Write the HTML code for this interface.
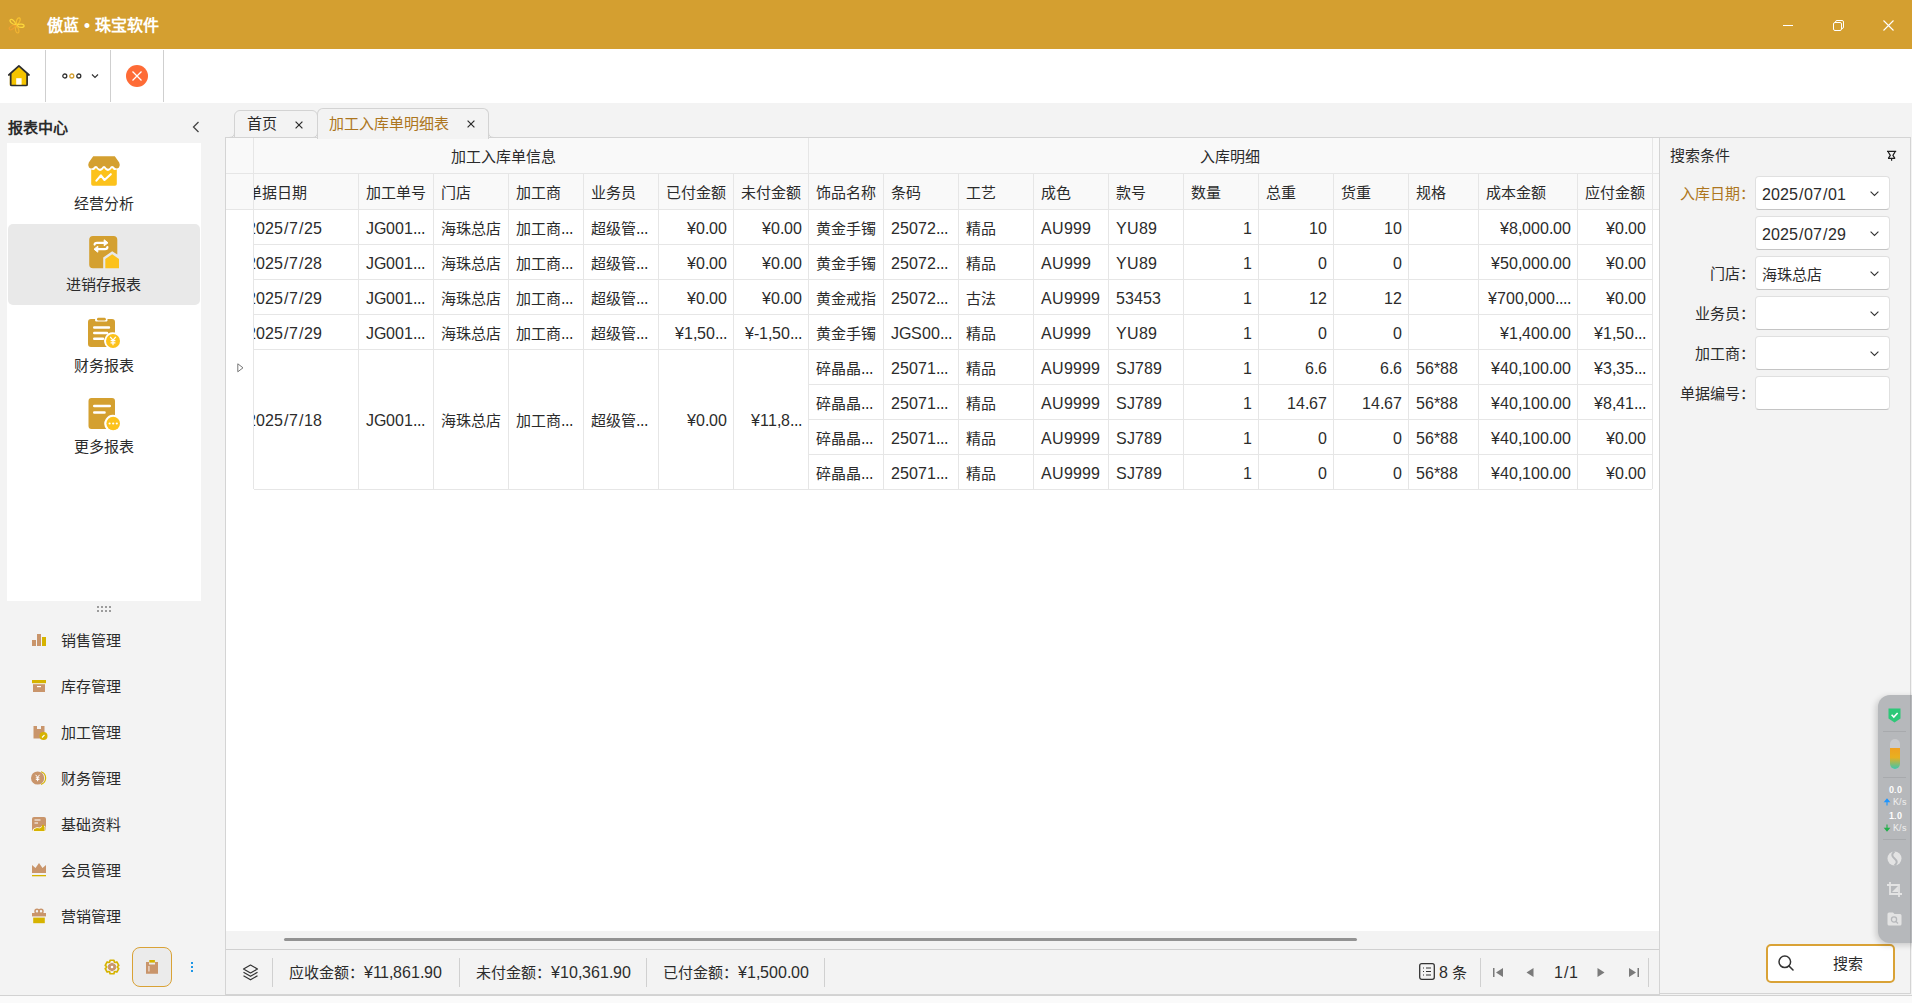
<!DOCTYPE html><html lang="zh-CN"><head><meta charset="utf-8"><style>
@font-face{font-family:"Liberation Sans";src:local("Liberation Sans"),local("LiberationSans");font-weight:400;size-adjust:105%;unicode-range:U+0000-024F,U+2000-206F,U+20A0-20CF}
@font-face{font-family:"Liberation Sans";src:local("Liberation Sans Bold"),local("LiberationSans-Bold");font-weight:700;size-adjust:105%;unicode-range:U+0000-024F,U+2000-206F,U+20A0-20CF}
*{box-sizing:border-box;margin:0;padding:0}
html,body{width:1912px;height:1003px;overflow:hidden}
body{position:relative;background:#f3f3f3;font-family:"Liberation Sans",sans-serif;font-size:15px;color:#2b2b2b}
.a{position:absolute}
.t{position:absolute;white-space:nowrap;line-height:23px}
.hl{position:absolute;height:1px;background:#e6e6e6}
.vl{position:absolute;width:1px;background:#e6e6e6}
svg{position:absolute;overflow:visible}
.sl{font-style:normal;margin:0 .9px}
</style></head><body>
<div class="a" style="left:0px;top:0px;width:1912px;height:49px;background:#d49f30"></div>
<svg style="left:8px;top:17px" width="16" height="16" viewBox="0 0 16 16"><path d="M0 -0.8C-2.6 -3.2 -2.6 -8.6 -0.6 -8.8C1.6 -9 2.8 -3.6 0 -0.8Z" transform="translate(8.2 8.2) scale(0.9) rotate(-45)" fill="none" stroke="#fcd63c" stroke-width="1.3"/><path d="M0 -0.8C-2.6 -3.2 -2.6 -8.6 -0.6 -8.8C1.6 -9 2.8 -3.6 0 -0.8Z" transform="translate(8.2 8.2) scale(0.9) rotate(27)" fill="none" stroke="#f8c030" stroke-width="1.3"/><path d="M0 -0.8C-2.6 -3.2 -2.6 -8.6 -0.6 -8.8C1.6 -9 2.8 -3.6 0 -0.8Z" transform="translate(8.2 8.2) scale(0.9) rotate(99)" fill="none" stroke="#fdd83c" stroke-width="1.3"/><path d="M0 -0.8C-2.6 -3.2 -2.6 -8.6 -0.6 -8.8C1.6 -9 2.8 -3.6 0 -0.8Z" transform="translate(8.2 8.2) scale(0.9) rotate(171)" fill="none" stroke="#f2b432" stroke-width="1.3"/><path d="M0 -0.8C-2.6 -3.2 -2.6 -8.6 -0.6 -8.8C1.6 -9 2.8 -3.6 0 -0.8Z" transform="translate(8.2 8.2) scale(0.9) rotate(243)" fill="none" stroke="#f0a030" stroke-width="1.3"/></svg>
<div class="t" style="left:47px;top:14px;color:#fff;font-size:16px;font-weight:bold">傲蓝 • 珠宝软件</div>
<div class="a" style="left:1783px;top:25px;width:10px;height:1px;background:#fff"></div>
<svg style="left:1833px;top:20px" width="11" height="11" viewBox="0 0 11 11"><rect x="0.5" y="2.5" width="8" height="8" rx="1.5" fill="none" stroke="#fff" stroke-width="1"/><path d="M2.5 2.5V2a1.5 1.5 0 0 1 1.5-1.5h5A1.5 1.5 0 0 1 10.5 2v5A1.5 1.5 0 0 1 9 8.5h-.5" fill="none" stroke="#fff" stroke-width="1"/></svg>
<svg style="left:1883px;top:20px" width="11" height="11" viewBox="0 0 11 11"><path d="M0.5 0.5L10.5 10.5M10.5 0.5L0.5 10.5" stroke="#fff" stroke-width="1.1"/></svg>
<div class="a" style="left:0px;top:49px;width:1912px;height:54px;background:#fff"></div>
<div class="a" style="left:45px;top:50px;width:1px;height:52px;background:#cfcfcf"></div>
<div class="a" style="left:110px;top:50px;width:1px;height:52px;background:#cfcfcf"></div>
<div class="a" style="left:163px;top:50px;width:1px;height:52px;background:#cfcfcf"></div>
<svg style="left:8px;top:65px" width="22" height="22" viewBox="0 0 22 22"><path d="M1.8 9.6L10.9 1.4L20 9.6V20.4H1.8Z" fill="#f5c400"/><path d="M0.8 10L10.9 0.9L21 10" fill="none" stroke="#2e2e2e" stroke-width="1.7" stroke-linecap="round" stroke-linejoin="round"/><path d="M2.7 8.6V19.4Q2.7 20.5 3.8 20.5H18Q19.1 20.5 19.1 19.4V8.6" fill="none" stroke="#2e2e2e" stroke-width="1.7"/><rect x="8.2" y="13.2" width="5.4" height="6.4" fill="#fff"/></svg>
<svg style="left:62px;top:72px" width="40" height="8" viewBox="0 0 40 8"><circle cx="2.8" cy="4" r="2" fill="none" stroke="#333" stroke-width="1.3"/><circle cx="9.8" cy="4" r="2" fill="none" stroke="#d49f30" stroke-width="1.3"/><circle cx="16.8" cy="4" r="2" fill="none" stroke="#333" stroke-width="1.3"/><path d="M30 2.5L33 5.5L36 2.5" fill="none" stroke="#333" stroke-width="1.2"/></svg>
<svg style="left:126px;top:65px" width="22" height="22" viewBox="0 0 22 22"><circle cx="11" cy="11" r="11" fill="#fe6b36"/><path d="M6.5 6.5L15.5 15.5M15.5 6.5L6.5 15.5" stroke="#fff" stroke-width="1.3"/></svg>
<div class="t" style="left:8px;top:116px;font-weight:bold">报表中心</div>
<svg style="left:191.5px;top:121px" width="8" height="12" viewBox="0 0 8 12"><path d="M6.5 1L1.5 6L6.5 11" fill="none" stroke="#444" stroke-width="1.3"/></svg>
<div class="a" style="left:7px;top:143px;width:194px;height:458px;background:#fff"></div>
<div class="a" style="left:8px;top:224px;width:192px;height:81px;background:#e9e9e9;border-radius:5px"></div>
<svg style="left:88px;top:156px" width="32" height="30" viewBox="0 0 32 30"><path d="M5.2 0.3H26.8L31.2 6.5Q32.6 9.5 31 11.4Q29.2 13 27 12Q25.5 10.2 24.1 10Q22.6 10.2 21.8 12Q20.2 13.6 18.4 12Q17.2 10.2 16 10Q14.8 10.2 13.6 12Q11.8 13.6 10.2 12Q9.4 10.2 7.9 10Q6.5 10.2 5 12Q2.8 13 1 11.4Q-0.6 9.5 0.8 6.5Z" fill="#d4a030"/><path d="M3.2 13.6Q5 14.6 6.6 13.4Q7.6 12.2 7.9 12.1Q8.4 12.2 9.4 13.6Q12.2 16.2 14.8 13.6Q15.6 12.2 16 12.1Q16.4 12.2 17.2 13.6Q19.8 16.2 22.6 13.6Q23.6 12.2 24.1 12.1Q24.4 12.2 25.4 13.4Q27 14.6 28.8 13.6V28a1.8 1.8 0 0 1-1.8 1.8H5a1.8 1.8 0 0 1-1.8-1.8Z" fill="#fcc21b"/><path d="M8.4 24.6L12.9 19.4L16.5 24L22.8 18.2" fill="none" stroke="#fff" stroke-width="2.1" stroke-linecap="round" stroke-linejoin="round"/></svg>
<div class="t" style="left:74px;top:192px;">经营分析</div>
<svg style="left:89px;top:236px" width="31" height="33" viewBox="0 0 31 33"><path d="M4 0H24.5A3.8 3.8 0 0 1 28.3 3.8V18.5L23.2 15.2L14.2 21.5V32.2H4A3.8 3.8 0 0 1 0.2 28.4V3.8A3.8 3.8 0 0 1 4 0Z" fill="#d4a030"/><path d="M16.3 23L23.2 18.2L30 23V32.2H16.3Z" fill="#fcc21b"/><path d="M5.6 8.6Q5.6 6.8 8 6.8H16" fill="none" stroke="#fff" stroke-width="2.2" stroke-linecap="round"/><path d="M15.2 3.8L19 6.8L15.2 9.8Z" fill="#fff" stroke="#fff" stroke-width="1" stroke-linejoin="round"/><path d="M18.4 11Q18.4 13.2 16 13.2H8" fill="none" stroke="#fff" stroke-width="2.2" stroke-linecap="round"/><path d="M8.8 10.2L5 13.2L8.8 16.2Z" fill="#fff" stroke="#fff" stroke-width="1" stroke-linejoin="round"/></svg>
<div class="t" style="left:66px;top:273px;">进销存报表</div>
<svg style="left:88px;top:318px" width="33" height="31" viewBox="0 0 33 31"><path d="M3 1H7.2A2 2 0 0 0 9 3.6H17.6A2 2 0 0 0 19.4 1H24A3 3 0 0 1 27 4V14.6A8.6 8.6 0 0 0 18.8 29H3A3 3 0 0 1 0 26V4A3 3 0 0 1 3 1Z" fill="#d4a030"/><rect x="9" y="-0.2" width="8.8" height="2.8" rx="1.4" fill="#d4a030"/><path d="M6.2 9.5H21M6.2 15H19M6.2 20.7H15" stroke="#fff" stroke-width="2.4" stroke-linecap="round"/><circle cx="25" cy="23" r="7" fill="#fcc21b"/><path d="M22.2 18.8L25 22.2L27.8 18.8M25 22.2V27.2M22.6 22.6H27.4M22.6 24.8H27.4" fill="none" stroke="#fff" stroke-width="1.2"/></svg>
<div class="t" style="left:74px;top:354px;">财务报表</div>
<svg style="left:88px;top:398px" width="33" height="33" viewBox="0 0 33 33"><path d="M3.5 0H24A3 3 0 0 1 27 3V16.9A8.8 8.8 0 0 0 18.3 31H3.5A3 3 0 0 1 0.5 28V3A3 3 0 0 1 3.5 0Z" fill="#d4a030"/><path d="M6.2 8H21.8M6.2 14.5H16.6" stroke="#fff" stroke-width="2.4" stroke-linecap="round"/><circle cx="25.2" cy="25.5" r="6.8" fill="#fcc21b"/><circle cx="21.6" cy="25.5" r="1.1" fill="#fff"/><circle cx="25.2" cy="25.5" r="1.1" fill="#fff"/><circle cx="28.8" cy="25.5" r="1.1" fill="#fff"/></svg>
<div class="t" style="left:74px;top:435px;">更多报表</div>
<div class="a" style="left:97px;top:606px;width:2px;height:2px;background:#9c9c9c"></div>
<div class="a" style="left:97px;top:610px;width:2px;height:2px;background:#9c9c9c"></div>
<div class="a" style="left:101px;top:606px;width:2px;height:2px;background:#9c9c9c"></div>
<div class="a" style="left:101px;top:610px;width:2px;height:2px;background:#9c9c9c"></div>
<div class="a" style="left:105px;top:606px;width:2px;height:2px;background:#9c9c9c"></div>
<div class="a" style="left:105px;top:610px;width:2px;height:2px;background:#9c9c9c"></div>
<div class="a" style="left:109px;top:606px;width:2px;height:2px;background:#9c9c9c"></div>
<div class="a" style="left:109px;top:610px;width:2px;height:2px;background:#9c9c9c"></div>
<svg style="left:32px;top:634px" width="16" height="16" viewBox="0 0 16 16"><rect x="0" y="6" width="4" height="6" fill="#c9956b"/><rect x="5" y="0" width="4" height="12" fill="#c9956b"/><rect x="10" y="3" width="4" height="9" fill="#d6b300"/></svg>
<div class="t" style="left:61px;top:629px;">销售管理</div>
<svg style="left:32px;top:680px" width="16" height="16" viewBox="0 0 16 16"><rect x="0" y="0" width="14" height="3.2" fill="#d6b300"/><rect x="1" y="4.2" width="12" height="7.8" fill="#c9956b"/><rect x="5" y="6" width="4" height="1.2" fill="#fff"/></svg>
<div class="t" style="left:61px;top:675px;">库存管理</div>
<svg style="left:33px;top:726px" width="16" height="16" viewBox="0 0 16 16"><path d="M0.5 0H4V3H8V0H11.5V8A5 5 0 0 0 8 12.5H0.5Z" fill="#c9956b"/><circle cx="10.5" cy="10" r="4" fill="#d6b300"/><path d="M9 11.5L11.5 9" stroke="#fff" stroke-width="1.1"/></svg>
<div class="t" style="left:61px;top:721px;">加工管理</div>
<svg style="left:31px;top:771px" width="16" height="16" viewBox="0 0 16 16"><path d="M10 0.8A6.6 6.6 0 0 1 10 13.4" fill="none" stroke="#d6b300" stroke-width="1.2"/><circle cx="6.6" cy="7" r="6.6" fill="#c9956b"/><path d="M4.6 3.8L6.6 6.2L8.6 3.8M6.6 6.2V10.2M4.8 6.8H8.4M4.8 8.4H8.4" fill="none" stroke="#fff" stroke-width="1"/></svg>
<div class="t" style="left:61px;top:767px;">财务管理</div>
<svg style="left:32px;top:817px" width="16" height="16" viewBox="0 0 16 16"><rect x="0" y="0" width="14" height="14" rx="2" fill="#c9956b"/><path d="M2.5 3H8.5M2.5 6H6" stroke="#fff" stroke-width="1.1"/><path d="M1.5 14.5V12Q5 9.5 8 11Q10 8 13 9.5V14.5Z" fill="#d6b300" stroke="#fff" stroke-width="0.8"/><circle cx="11" cy="9" r="1.2" fill="#d6b300"/></svg>
<div class="t" style="left:61px;top:813px;">基础资料</div>
<svg style="left:32px;top:863px" width="16" height="16" viewBox="0 0 16 16"><path d="M0 2L3.5 5L7 0L10.5 5L14 2V10H0Z" fill="#c9956b"/><rect x="0" y="12" width="14" height="1.3" fill="#d6b300"/></svg>
<div class="t" style="left:61px;top:859px;">会员管理</div>
<svg style="left:32px;top:909px" width="16" height="16" viewBox="0 0 16 16"><circle cx="5" cy="2.2" r="2" fill="none" stroke="#c9956b" stroke-width="1.5"/><circle cx="9" cy="2.2" r="2" fill="none" stroke="#c9956b" stroke-width="1.5"/><rect x="0" y="4" width="14" height="3.4" fill="#c9956b"/><rect x="1.2" y="8.6" width="11.6" height="5.6" fill="#d6b300"/></svg>
<div class="t" style="left:61px;top:905px;">营销管理</div>
<svg style="left:104px;top:959px" width="16" height="16" viewBox="0 0 16 16"><path d="M6.07 1.27 L9.93 1.27 L10.37 3.15 L11.02 3.52 L12.86 2.96 L14.79 6.31 L13.39 7.62 L13.39 8.38 L14.79 9.69 L12.86 13.04 L11.02 12.48 L10.37 12.85 L9.93 14.73 L6.07 14.73 L5.63 12.85 L4.98 12.48 L3.14 13.04 L1.21 9.69 L2.61 8.38 L2.61 7.62 L1.21 6.31 L3.14 2.96 L4.98 3.52 L5.63 3.15Z" fill="none" stroke="#d6b300" stroke-width="1.7" stroke-linejoin="round"/><path d="M8.00 4.10 L11.38 6.05 L11.38 9.95 L8.00 11.90 L4.62 9.95 L4.62 6.05Z" fill="#c9956b" stroke="#c9956b" stroke-width="1" stroke-linejoin="round"/><circle cx="8" cy="8" r="1.3" fill="#fff"/></svg>
<div class="a" style="left:132px;top:947px;width:40px;height:40px;border:1.5px solid #d9a236;border-radius:8px;background:#ebebeb"></div>
<svg style="left:146px;top:960px" width="13" height="15" viewBox="0 0 13 15"><path d="M0 2H3V4.5H9V2H12V13.8H0Z" fill="#c9956b"/><rect x="3.3" y="0" width="5.6" height="2.6" fill="#d6b300"/><rect x="2.5" y="6" width="0.9" height="5.5" fill="#fff"/></svg>
<div class="a" style="left:191px;top:962px;width:2px;height:2px;background:#1e96e6"></div>
<div class="a" style="left:191px;top:966px;width:2px;height:2px;background:#1e96e6"></div>
<div class="a" style="left:191px;top:970px;width:2px;height:2px;background:#1e96e6"></div>
<div class="a" style="left:0px;top:995px;width:1912px;height:1px;background:#d2d2d2"></div>
<div class="a" style="left:0px;top:996px;width:1912px;height:7px;background:#fafafa"></div>
<div class="a" style="left:225px;top:137px;width:1435px;height:858px;background:#f3f3f3;border:1px solid #d4d4d4"></div>
<div class="a" style="left:226px;top:138px;width:1433px;height:71px;background:#f9f9f9"></div>
<div class="a" style="left:226px;top:210px;width:1433px;height:721px;background:#fff"></div>
<div class="a" style="left:226px;top:173px;width:1433px;height:1px;background:#e6e6e6"></div>
<div class="a" style="left:226px;top:209px;width:1433px;height:1px;background:#e6e6e6"></div>
<div class="a" style="left:253px;top:138px;width:1px;height:351px;background:#e6e6e6"></div>
<div class="a" style="left:808px;top:138px;width:1px;height:35px;background:#e6e6e6"></div>
<div class="a" style="left:1652px;top:138px;width:1px;height:351px;background:#e6e6e6"></div>
<div class="a" style="left:358px;top:173px;width:1px;height:36px;background:#e6e6e6"></div>
<div class="a" style="left:433px;top:173px;width:1px;height:36px;background:#e6e6e6"></div>
<div class="a" style="left:508px;top:173px;width:1px;height:36px;background:#e6e6e6"></div>
<div class="a" style="left:583px;top:173px;width:1px;height:36px;background:#e6e6e6"></div>
<div class="a" style="left:658px;top:173px;width:1px;height:36px;background:#e6e6e6"></div>
<div class="a" style="left:733px;top:173px;width:1px;height:36px;background:#e6e6e6"></div>
<div class="a" style="left:808px;top:173px;width:1px;height:36px;background:#e6e6e6"></div>
<div class="a" style="left:883px;top:173px;width:1px;height:36px;background:#e6e6e6"></div>
<div class="a" style="left:958px;top:173px;width:1px;height:36px;background:#e6e6e6"></div>
<div class="a" style="left:1033px;top:173px;width:1px;height:36px;background:#e6e6e6"></div>
<div class="a" style="left:1108px;top:173px;width:1px;height:36px;background:#e6e6e6"></div>
<div class="a" style="left:1183px;top:173px;width:1px;height:36px;background:#e6e6e6"></div>
<div class="a" style="left:1258px;top:173px;width:1px;height:36px;background:#e6e6e6"></div>
<div class="a" style="left:1333px;top:173px;width:1px;height:36px;background:#e6e6e6"></div>
<div class="a" style="left:1408px;top:173px;width:1px;height:36px;background:#e6e6e6"></div>
<div class="a" style="left:1478px;top:173px;width:1px;height:36px;background:#e6e6e6"></div>
<div class="a" style="left:1577px;top:173px;width:1px;height:36px;background:#e6e6e6"></div>
<div class="t" style="left:203px;width:600px;text-align:center;top:145px;">加工入库单信息</div>
<div class="t" style="left:930px;width:600px;text-align:center;top:145px;">入库明细</div>
<div class="a" style="left:254px;top:173px;width:104px;height:36px;overflow:hidden">
<div class="t" style="left:-7px;top:8px">单据日期</div>
</div>
<div class="t" style="left:366px;top:181px;">加工单号</div>
<div class="t" style="left:441px;top:181px;">门店</div>
<div class="t" style="left:516px;top:181px;">加工商</div>
<div class="t" style="left:591px;top:181px;">业务员</div>
<div class="t" style="left:666px;top:181px;">已付金额</div>
<div class="t" style="left:741px;top:181px;">未付金额</div>
<div class="t" style="left:816px;top:181px;">饰品名称</div>
<div class="t" style="left:891px;top:181px;">条码</div>
<div class="t" style="left:966px;top:181px;">工艺</div>
<div class="t" style="left:1041px;top:181px;">成色</div>
<div class="t" style="left:1116px;top:181px;">款号</div>
<div class="t" style="left:1191px;top:181px;">数量</div>
<div class="t" style="left:1266px;top:181px;">总重</div>
<div class="t" style="left:1341px;top:181px;">货重</div>
<div class="t" style="left:1416px;top:181px;">规格</div>
<div class="t" style="left:1486px;top:181px;">成本金额</div>
<div class="t" style="left:1585px;top:181px;">应付金额</div>
<div class="a" style="left:254px;top:244px;width:1398px;height:1px;background:#e6e6e6"></div>
<div class="a" style="left:253px;top:209px;width:1px;height:35px;background:#e6e6e6"></div>
<div class="a" style="left:358px;top:209px;width:1px;height:35px;background:#e6e6e6"></div>
<div class="a" style="left:433px;top:209px;width:1px;height:35px;background:#e6e6e6"></div>
<div class="a" style="left:508px;top:209px;width:1px;height:35px;background:#e6e6e6"></div>
<div class="a" style="left:583px;top:209px;width:1px;height:35px;background:#e6e6e6"></div>
<div class="a" style="left:658px;top:209px;width:1px;height:35px;background:#e6e6e6"></div>
<div class="a" style="left:733px;top:209px;width:1px;height:35px;background:#e6e6e6"></div>
<div class="a" style="left:808px;top:209px;width:1px;height:35px;background:#e6e6e6"></div>
<div class="a" style="left:883px;top:209px;width:1px;height:35px;background:#e6e6e6"></div>
<div class="a" style="left:958px;top:209px;width:1px;height:35px;background:#e6e6e6"></div>
<div class="a" style="left:1033px;top:209px;width:1px;height:35px;background:#e6e6e6"></div>
<div class="a" style="left:1108px;top:209px;width:1px;height:35px;background:#e6e6e6"></div>
<div class="a" style="left:1183px;top:209px;width:1px;height:35px;background:#e6e6e6"></div>
<div class="a" style="left:1258px;top:209px;width:1px;height:35px;background:#e6e6e6"></div>
<div class="a" style="left:1333px;top:209px;width:1px;height:35px;background:#e6e6e6"></div>
<div class="a" style="left:1408px;top:209px;width:1px;height:35px;background:#e6e6e6"></div>
<div class="a" style="left:1478px;top:209px;width:1px;height:35px;background:#e6e6e6"></div>
<div class="a" style="left:1577px;top:209px;width:1px;height:35px;background:#e6e6e6"></div>
<div class="a" style="left:254px;top:217px;width:104px;height:24px;overflow:hidden"><div class="t" style="left:-7px;top:0">2025<i class="sl">/</i>7<i class="sl">/</i>25</div></div>
<div class="t" style="left:366px;top:217px;">JG001...</div>
<div class="t" style="left:441px;top:217px;">海珠总店</div>
<div class="t" style="left:516px;top:217px;">加工商...</div>
<div class="t" style="left:591px;top:217px;">超级管...</div>
<div class="t" style="right:1185px;top:217px;">¥0.00</div>
<div class="t" style="right:1110px;top:217px;">¥0.00</div>
<div class="t" style="left:816px;top:217px;">黄金手镯</div>
<div class="t" style="left:891px;top:217px;">25072...</div>
<div class="t" style="left:966px;top:217px;">精品</div>
<div class="t" style="left:1041px;top:217px;">AU999</div>
<div class="t" style="left:1116px;top:217px;">YU89</div>
<div class="t" style="right:660px;top:217px;">1</div>
<div class="t" style="right:585px;top:217px;">10</div>
<div class="t" style="right:510px;top:217px;">10</div>
<div class="t" style="right:341px;top:217px;">¥8,000.00</div>
<div class="t" style="right:266px;top:217px;">¥0.00</div>
<div class="a" style="left:254px;top:279px;width:1398px;height:1px;background:#e6e6e6"></div>
<div class="a" style="left:253px;top:244px;width:1px;height:35px;background:#e6e6e6"></div>
<div class="a" style="left:358px;top:244px;width:1px;height:35px;background:#e6e6e6"></div>
<div class="a" style="left:433px;top:244px;width:1px;height:35px;background:#e6e6e6"></div>
<div class="a" style="left:508px;top:244px;width:1px;height:35px;background:#e6e6e6"></div>
<div class="a" style="left:583px;top:244px;width:1px;height:35px;background:#e6e6e6"></div>
<div class="a" style="left:658px;top:244px;width:1px;height:35px;background:#e6e6e6"></div>
<div class="a" style="left:733px;top:244px;width:1px;height:35px;background:#e6e6e6"></div>
<div class="a" style="left:808px;top:244px;width:1px;height:35px;background:#e6e6e6"></div>
<div class="a" style="left:883px;top:244px;width:1px;height:35px;background:#e6e6e6"></div>
<div class="a" style="left:958px;top:244px;width:1px;height:35px;background:#e6e6e6"></div>
<div class="a" style="left:1033px;top:244px;width:1px;height:35px;background:#e6e6e6"></div>
<div class="a" style="left:1108px;top:244px;width:1px;height:35px;background:#e6e6e6"></div>
<div class="a" style="left:1183px;top:244px;width:1px;height:35px;background:#e6e6e6"></div>
<div class="a" style="left:1258px;top:244px;width:1px;height:35px;background:#e6e6e6"></div>
<div class="a" style="left:1333px;top:244px;width:1px;height:35px;background:#e6e6e6"></div>
<div class="a" style="left:1408px;top:244px;width:1px;height:35px;background:#e6e6e6"></div>
<div class="a" style="left:1478px;top:244px;width:1px;height:35px;background:#e6e6e6"></div>
<div class="a" style="left:1577px;top:244px;width:1px;height:35px;background:#e6e6e6"></div>
<div class="a" style="left:254px;top:252px;width:104px;height:24px;overflow:hidden"><div class="t" style="left:-7px;top:0">2025<i class="sl">/</i>7<i class="sl">/</i>28</div></div>
<div class="t" style="left:366px;top:252px;">JG001...</div>
<div class="t" style="left:441px;top:252px;">海珠总店</div>
<div class="t" style="left:516px;top:252px;">加工商...</div>
<div class="t" style="left:591px;top:252px;">超级管...</div>
<div class="t" style="right:1185px;top:252px;">¥0.00</div>
<div class="t" style="right:1110px;top:252px;">¥0.00</div>
<div class="t" style="left:816px;top:252px;">黄金手镯</div>
<div class="t" style="left:891px;top:252px;">25072...</div>
<div class="t" style="left:966px;top:252px;">精品</div>
<div class="t" style="left:1041px;top:252px;">AU999</div>
<div class="t" style="left:1116px;top:252px;">YU89</div>
<div class="t" style="right:660px;top:252px;">1</div>
<div class="t" style="right:585px;top:252px;">0</div>
<div class="t" style="right:510px;top:252px;">0</div>
<div class="t" style="right:341px;top:252px;">¥50,000.00</div>
<div class="t" style="right:266px;top:252px;">¥0.00</div>
<div class="a" style="left:254px;top:314px;width:1398px;height:1px;background:#e6e6e6"></div>
<div class="a" style="left:253px;top:279px;width:1px;height:35px;background:#e6e6e6"></div>
<div class="a" style="left:358px;top:279px;width:1px;height:35px;background:#e6e6e6"></div>
<div class="a" style="left:433px;top:279px;width:1px;height:35px;background:#e6e6e6"></div>
<div class="a" style="left:508px;top:279px;width:1px;height:35px;background:#e6e6e6"></div>
<div class="a" style="left:583px;top:279px;width:1px;height:35px;background:#e6e6e6"></div>
<div class="a" style="left:658px;top:279px;width:1px;height:35px;background:#e6e6e6"></div>
<div class="a" style="left:733px;top:279px;width:1px;height:35px;background:#e6e6e6"></div>
<div class="a" style="left:808px;top:279px;width:1px;height:35px;background:#e6e6e6"></div>
<div class="a" style="left:883px;top:279px;width:1px;height:35px;background:#e6e6e6"></div>
<div class="a" style="left:958px;top:279px;width:1px;height:35px;background:#e6e6e6"></div>
<div class="a" style="left:1033px;top:279px;width:1px;height:35px;background:#e6e6e6"></div>
<div class="a" style="left:1108px;top:279px;width:1px;height:35px;background:#e6e6e6"></div>
<div class="a" style="left:1183px;top:279px;width:1px;height:35px;background:#e6e6e6"></div>
<div class="a" style="left:1258px;top:279px;width:1px;height:35px;background:#e6e6e6"></div>
<div class="a" style="left:1333px;top:279px;width:1px;height:35px;background:#e6e6e6"></div>
<div class="a" style="left:1408px;top:279px;width:1px;height:35px;background:#e6e6e6"></div>
<div class="a" style="left:1478px;top:279px;width:1px;height:35px;background:#e6e6e6"></div>
<div class="a" style="left:1577px;top:279px;width:1px;height:35px;background:#e6e6e6"></div>
<div class="a" style="left:254px;top:287px;width:104px;height:24px;overflow:hidden"><div class="t" style="left:-7px;top:0">2025<i class="sl">/</i>7<i class="sl">/</i>29</div></div>
<div class="t" style="left:366px;top:287px;">JG001...</div>
<div class="t" style="left:441px;top:287px;">海珠总店</div>
<div class="t" style="left:516px;top:287px;">加工商...</div>
<div class="t" style="left:591px;top:287px;">超级管...</div>
<div class="t" style="right:1185px;top:287px;">¥0.00</div>
<div class="t" style="right:1110px;top:287px;">¥0.00</div>
<div class="t" style="left:816px;top:287px;">黄金戒指</div>
<div class="t" style="left:891px;top:287px;">25072...</div>
<div class="t" style="left:966px;top:287px;">古法</div>
<div class="t" style="left:1041px;top:287px;">AU9999</div>
<div class="t" style="left:1116px;top:287px;">53453</div>
<div class="t" style="right:660px;top:287px;">1</div>
<div class="t" style="right:585px;top:287px;">12</div>
<div class="t" style="right:510px;top:287px;">12</div>
<div class="t" style="right:341px;top:287px;">¥700,000....</div>
<div class="t" style="right:266px;top:287px;">¥0.00</div>
<div class="a" style="left:254px;top:349px;width:1398px;height:1px;background:#e6e6e6"></div>
<div class="a" style="left:253px;top:314px;width:1px;height:35px;background:#e6e6e6"></div>
<div class="a" style="left:358px;top:314px;width:1px;height:35px;background:#e6e6e6"></div>
<div class="a" style="left:433px;top:314px;width:1px;height:35px;background:#e6e6e6"></div>
<div class="a" style="left:508px;top:314px;width:1px;height:35px;background:#e6e6e6"></div>
<div class="a" style="left:583px;top:314px;width:1px;height:35px;background:#e6e6e6"></div>
<div class="a" style="left:658px;top:314px;width:1px;height:35px;background:#e6e6e6"></div>
<div class="a" style="left:733px;top:314px;width:1px;height:35px;background:#e6e6e6"></div>
<div class="a" style="left:808px;top:314px;width:1px;height:35px;background:#e6e6e6"></div>
<div class="a" style="left:883px;top:314px;width:1px;height:35px;background:#e6e6e6"></div>
<div class="a" style="left:958px;top:314px;width:1px;height:35px;background:#e6e6e6"></div>
<div class="a" style="left:1033px;top:314px;width:1px;height:35px;background:#e6e6e6"></div>
<div class="a" style="left:1108px;top:314px;width:1px;height:35px;background:#e6e6e6"></div>
<div class="a" style="left:1183px;top:314px;width:1px;height:35px;background:#e6e6e6"></div>
<div class="a" style="left:1258px;top:314px;width:1px;height:35px;background:#e6e6e6"></div>
<div class="a" style="left:1333px;top:314px;width:1px;height:35px;background:#e6e6e6"></div>
<div class="a" style="left:1408px;top:314px;width:1px;height:35px;background:#e6e6e6"></div>
<div class="a" style="left:1478px;top:314px;width:1px;height:35px;background:#e6e6e6"></div>
<div class="a" style="left:1577px;top:314px;width:1px;height:35px;background:#e6e6e6"></div>
<div class="a" style="left:254px;top:322px;width:104px;height:24px;overflow:hidden"><div class="t" style="left:-7px;top:0">2025<i class="sl">/</i>7<i class="sl">/</i>29</div></div>
<div class="t" style="left:366px;top:322px;">JG001...</div>
<div class="t" style="left:441px;top:322px;">海珠总店</div>
<div class="t" style="left:516px;top:322px;">加工商...</div>
<div class="t" style="left:591px;top:322px;">超级管...</div>
<div class="t" style="right:1185px;top:322px;">¥1,50...</div>
<div class="t" style="right:1110px;top:322px;">¥-1,50...</div>
<div class="t" style="left:816px;top:322px;">黄金手镯</div>
<div class="t" style="left:891px;top:322px;">JGS00...</div>
<div class="t" style="left:966px;top:322px;">精品</div>
<div class="t" style="left:1041px;top:322px;">AU999</div>
<div class="t" style="left:1116px;top:322px;">YU89</div>
<div class="t" style="right:660px;top:322px;">1</div>
<div class="t" style="right:585px;top:322px;">0</div>
<div class="t" style="right:510px;top:322px;">0</div>
<div class="t" style="right:341px;top:322px;">¥1,400.00</div>
<div class="t" style="right:266px;top:322px;">¥1,50...</div>
<div class="a" style="left:254px;top:489px;width:1398px;height:1px;background:#e6e6e6"></div>
<div class="a" style="left:253px;top:349px;width:1px;height:140px;background:#e6e6e6"></div>
<div class="a" style="left:358px;top:349px;width:1px;height:140px;background:#e6e6e6"></div>
<div class="a" style="left:433px;top:349px;width:1px;height:140px;background:#e6e6e6"></div>
<div class="a" style="left:508px;top:349px;width:1px;height:140px;background:#e6e6e6"></div>
<div class="a" style="left:583px;top:349px;width:1px;height:140px;background:#e6e6e6"></div>
<div class="a" style="left:658px;top:349px;width:1px;height:140px;background:#e6e6e6"></div>
<div class="a" style="left:733px;top:349px;width:1px;height:140px;background:#e6e6e6"></div>
<div class="a" style="left:808px;top:349px;width:1px;height:140px;background:#e6e6e6"></div>
<div class="a" style="left:254px;top:409px;width:104px;height:24px;overflow:hidden"><div class="t" style="left:-7px;top:0">2025<i class="sl">/</i>7<i class="sl">/</i>18</div></div>
<div class="t" style="left:366px;top:409px;">JG001...</div>
<div class="t" style="left:441px;top:409px;">海珠总店</div>
<div class="t" style="left:516px;top:409px;">加工商...</div>
<div class="t" style="left:591px;top:409px;">超级管...</div>
<div class="t" style="right:1185px;top:409px;">¥0.00</div>
<div class="t" style="right:1110px;top:409px;">¥11,8...</div>
<div class="a" style="left:808px;top:384px;width:844px;height:1px;background:#e6e6e6"></div>
<div class="a" style="left:808px;top:349px;width:1px;height:35px;background:#e6e6e6"></div>
<div class="a" style="left:883px;top:349px;width:1px;height:35px;background:#e6e6e6"></div>
<div class="a" style="left:958px;top:349px;width:1px;height:35px;background:#e6e6e6"></div>
<div class="a" style="left:1033px;top:349px;width:1px;height:35px;background:#e6e6e6"></div>
<div class="a" style="left:1108px;top:349px;width:1px;height:35px;background:#e6e6e6"></div>
<div class="a" style="left:1183px;top:349px;width:1px;height:35px;background:#e6e6e6"></div>
<div class="a" style="left:1258px;top:349px;width:1px;height:35px;background:#e6e6e6"></div>
<div class="a" style="left:1333px;top:349px;width:1px;height:35px;background:#e6e6e6"></div>
<div class="a" style="left:1408px;top:349px;width:1px;height:35px;background:#e6e6e6"></div>
<div class="a" style="left:1478px;top:349px;width:1px;height:35px;background:#e6e6e6"></div>
<div class="a" style="left:1577px;top:349px;width:1px;height:35px;background:#e6e6e6"></div>
<div class="t" style="left:816px;top:357px;">碎晶晶...</div>
<div class="t" style="left:891px;top:357px;">25071...</div>
<div class="t" style="left:966px;top:357px;">精品</div>
<div class="t" style="left:1041px;top:357px;">AU9999</div>
<div class="t" style="left:1116px;top:357px;">SJ789</div>
<div class="t" style="right:660px;top:357px;">1</div>
<div class="t" style="right:585px;top:357px;">6.6</div>
<div class="t" style="right:510px;top:357px;">6.6</div>
<div class="t" style="left:1416px;top:357px;">56*88</div>
<div class="t" style="right:341px;top:357px;">¥40,100.00</div>
<div class="t" style="right:266px;top:357px;">¥3,35...</div>
<div class="a" style="left:808px;top:419px;width:844px;height:1px;background:#e6e6e6"></div>
<div class="a" style="left:808px;top:384px;width:1px;height:35px;background:#e6e6e6"></div>
<div class="a" style="left:883px;top:384px;width:1px;height:35px;background:#e6e6e6"></div>
<div class="a" style="left:958px;top:384px;width:1px;height:35px;background:#e6e6e6"></div>
<div class="a" style="left:1033px;top:384px;width:1px;height:35px;background:#e6e6e6"></div>
<div class="a" style="left:1108px;top:384px;width:1px;height:35px;background:#e6e6e6"></div>
<div class="a" style="left:1183px;top:384px;width:1px;height:35px;background:#e6e6e6"></div>
<div class="a" style="left:1258px;top:384px;width:1px;height:35px;background:#e6e6e6"></div>
<div class="a" style="left:1333px;top:384px;width:1px;height:35px;background:#e6e6e6"></div>
<div class="a" style="left:1408px;top:384px;width:1px;height:35px;background:#e6e6e6"></div>
<div class="a" style="left:1478px;top:384px;width:1px;height:35px;background:#e6e6e6"></div>
<div class="a" style="left:1577px;top:384px;width:1px;height:35px;background:#e6e6e6"></div>
<div class="t" style="left:816px;top:392px;">碎晶晶...</div>
<div class="t" style="left:891px;top:392px;">25071...</div>
<div class="t" style="left:966px;top:392px;">精品</div>
<div class="t" style="left:1041px;top:392px;">AU9999</div>
<div class="t" style="left:1116px;top:392px;">SJ789</div>
<div class="t" style="right:660px;top:392px;">1</div>
<div class="t" style="right:585px;top:392px;">14.67</div>
<div class="t" style="right:510px;top:392px;">14.67</div>
<div class="t" style="left:1416px;top:392px;">56*88</div>
<div class="t" style="right:341px;top:392px;">¥40,100.00</div>
<div class="t" style="right:266px;top:392px;">¥8,41...</div>
<div class="a" style="left:808px;top:454px;width:844px;height:1px;background:#e6e6e6"></div>
<div class="a" style="left:808px;top:419px;width:1px;height:35px;background:#e6e6e6"></div>
<div class="a" style="left:883px;top:419px;width:1px;height:35px;background:#e6e6e6"></div>
<div class="a" style="left:958px;top:419px;width:1px;height:35px;background:#e6e6e6"></div>
<div class="a" style="left:1033px;top:419px;width:1px;height:35px;background:#e6e6e6"></div>
<div class="a" style="left:1108px;top:419px;width:1px;height:35px;background:#e6e6e6"></div>
<div class="a" style="left:1183px;top:419px;width:1px;height:35px;background:#e6e6e6"></div>
<div class="a" style="left:1258px;top:419px;width:1px;height:35px;background:#e6e6e6"></div>
<div class="a" style="left:1333px;top:419px;width:1px;height:35px;background:#e6e6e6"></div>
<div class="a" style="left:1408px;top:419px;width:1px;height:35px;background:#e6e6e6"></div>
<div class="a" style="left:1478px;top:419px;width:1px;height:35px;background:#e6e6e6"></div>
<div class="a" style="left:1577px;top:419px;width:1px;height:35px;background:#e6e6e6"></div>
<div class="t" style="left:816px;top:427px;">碎晶晶...</div>
<div class="t" style="left:891px;top:427px;">25071...</div>
<div class="t" style="left:966px;top:427px;">精品</div>
<div class="t" style="left:1041px;top:427px;">AU9999</div>
<div class="t" style="left:1116px;top:427px;">SJ789</div>
<div class="t" style="right:660px;top:427px;">1</div>
<div class="t" style="right:585px;top:427px;">0</div>
<div class="t" style="right:510px;top:427px;">0</div>
<div class="t" style="left:1416px;top:427px;">56*88</div>
<div class="t" style="right:341px;top:427px;">¥40,100.00</div>
<div class="t" style="right:266px;top:427px;">¥0.00</div>
<div class="a" style="left:808px;top:454px;width:1px;height:35px;background:#e6e6e6"></div>
<div class="a" style="left:883px;top:454px;width:1px;height:35px;background:#e6e6e6"></div>
<div class="a" style="left:958px;top:454px;width:1px;height:35px;background:#e6e6e6"></div>
<div class="a" style="left:1033px;top:454px;width:1px;height:35px;background:#e6e6e6"></div>
<div class="a" style="left:1108px;top:454px;width:1px;height:35px;background:#e6e6e6"></div>
<div class="a" style="left:1183px;top:454px;width:1px;height:35px;background:#e6e6e6"></div>
<div class="a" style="left:1258px;top:454px;width:1px;height:35px;background:#e6e6e6"></div>
<div class="a" style="left:1333px;top:454px;width:1px;height:35px;background:#e6e6e6"></div>
<div class="a" style="left:1408px;top:454px;width:1px;height:35px;background:#e6e6e6"></div>
<div class="a" style="left:1478px;top:454px;width:1px;height:35px;background:#e6e6e6"></div>
<div class="a" style="left:1577px;top:454px;width:1px;height:35px;background:#e6e6e6"></div>
<div class="t" style="left:816px;top:462px;">碎晶晶...</div>
<div class="t" style="left:891px;top:462px;">25071...</div>
<div class="t" style="left:966px;top:462px;">精品</div>
<div class="t" style="left:1041px;top:462px;">AU9999</div>
<div class="t" style="left:1116px;top:462px;">SJ789</div>
<div class="t" style="right:660px;top:462px;">1</div>
<div class="t" style="right:585px;top:462px;">0</div>
<div class="t" style="right:510px;top:462px;">0</div>
<div class="t" style="left:1416px;top:462px;">56*88</div>
<div class="t" style="right:341px;top:462px;">¥40,100.00</div>
<div class="t" style="right:266px;top:462px;">¥0.00</div>
<svg style="left:237px;top:363px" width="7" height="10" viewBox="0 0 7 10"><path d="M0.8 0.8L6 4.8L0.8 8.8Z" fill="none" stroke="#777" stroke-width="1"/></svg>
<div class="a" style="left:284px;top:937.5px;width:1073px;height:3.5px;background:#939393;border-radius:2px"></div>
<div class="a" style="left:234px;top:110px;width:84px;height:28px;background:#f3f3f3;border:1px solid #d3d3d3;border-radius:6px 6px 5px 0"></div>
<svg style="left:228px;top:131px" width="8" height="7" viewBox="0 0 8 7"><path d="M6.5 0V1.5Q6.5 6.5 1 6.5H0" fill="none" stroke="#d3d3d3" stroke-width="1"/></svg>
<div class="a" style="left:317px;top:108px;width:172px;height:31px;background:#f3f3f3;border:1px solid #d3d3d3;border-bottom:none;border-radius:6px 6px 0 0"></div>
<svg style="left:488px;top:131px" width="8" height="7" viewBox="0 0 8 7"><path d="M0.5 0V1.5Q0.5 6.5 6 6.5H8" fill="none" stroke="#d3d3d3" stroke-width="1"/></svg>
<div class="t" style="left:247px;top:112px;">首页</div>
<svg style="left:295px;top:121px" width="8" height="8" viewBox="0 0 8 8"><path d="M0.6 0.6L7.4 7.4M7.4 0.6L0.6 7.4" stroke="#2b2b2b" stroke-width="1.2"/></svg>
<div class="t" style="left:329px;top:112px;color:#ad7620">加工入库单明细表</div>
<svg style="left:467px;top:120px" width="8" height="8" viewBox="0 0 8 8"><path d="M0.6 0.6L7.4 7.4M7.4 0.6L0.6 7.4" stroke="#2b2b2b" stroke-width="1.2"/></svg>
<div class="a" style="left:226px;top:949px;width:1433px;height:1px;background:#d0d0d0"></div>
<svg style="left:243px;top:963.5px" width="16" height="17" viewBox="0 0 16 17"><path d="M7.5 1L14.5 5L7.5 9L0.5 5Z" fill="none" stroke="#333" stroke-width="1.2" stroke-linejoin="round"/><path d="M0.5 8.3L7.5 12.3L14.5 8.3M0.5 11.8L7.5 15.8L14.5 11.8" fill="none" stroke="#333" stroke-width="1.2" stroke-linejoin="round"/></svg>
<div class="a" style="left:272px;top:958px;width:1px;height:29px;background:#d0d0d0"></div>
<div class="a" style="left:459px;top:958px;width:1px;height:29px;background:#d0d0d0"></div>
<div class="a" style="left:646px;top:958px;width:1px;height:29px;background:#d0d0d0"></div>
<div class="a" style="left:824px;top:958px;width:1px;height:29px;background:#d0d0d0"></div>
<div class="a" style="left:1480px;top:958px;width:1px;height:29px;background:#d0d0d0"></div>
<div class="a" style="left:1648px;top:958px;width:1px;height:29px;background:#d0d0d0"></div>
<div class="t" style="left:289px;top:961px;">应收金额：¥11,861.90</div>
<div class="t" style="left:476px;top:961px;">未付金额：¥10,361.90</div>
<div class="t" style="left:663px;top:961px;">已付金额：¥1,500.00</div>
<svg style="left:1419px;top:963px" width="16" height="17" viewBox="0 0 16 17"><rect x="0.7" y="0.7" width="14.6" height="15.6" rx="2" fill="none" stroke="#333" stroke-width="1.3"/><path d="M4 5H5M7 5H12M4 8.5H5M7 8.5H12M4 12H5M7 12H12" stroke="#333" stroke-width="1.2"/></svg>
<div class="t" style="left:1439px;top:961px;">8 条</div>
<svg style="left:1493px;top:968px" width="11" height="9" viewBox="0 0 11 9"><rect x="0" y="0" width="1.5" height="9" fill="#7a7a7a"/><path d="M10 0V9L3 4.5Z" fill="#7a7a7a"/></svg>
<svg style="left:1526px;top:968px" width="8" height="9" viewBox="0 0 8 9"><path d="M7.5 0V9L0.5 4.5Z" fill="#7a7a7a"/></svg>
<div class="t" style="left:1554px;top:961px;">1<i class="sl">/</i>1</div>
<svg style="left:1597px;top:968px" width="8" height="9" viewBox="0 0 8 9"><path d="M0.5 0V9L7.5 4.5Z" fill="#7a7a7a"/></svg>
<svg style="left:1628px;top:968px" width="11" height="9" viewBox="0 0 11 9"><rect x="9.5" y="0" width="1.5" height="9" fill="#7a7a7a"/><path d="M1 0V9L8 4.5Z" fill="#7a7a7a"/></svg>
<div class="a" style="left:1910px;top:137px;width:1px;height:857px;background:#d4d4d4"></div>
<div class="a" style="left:1659px;top:137px;width:252px;height:1px;background:#d4d4d4"></div>
<div class="a" style="left:1659px;top:993px;width:252px;height:1px;background:#d4d4d4"></div>
<div class="t" style="left:1670px;top:144px;">搜索条件</div>
<svg style="left:1886px;top:150px" width="11" height="12" viewBox="0 0 11 12"><path d="M1 1.3H10.2M1.8 1.3L4.3 5.4L2.3 8.3M9.4 1.3L6.9 5.4L8.9 8.3M2 8.3H9.2M5.6 8.3V10.8" fill="none" stroke="#1e1e1e" stroke-width="1.2" stroke-linejoin="round"/></svg>
<div class="a" style="left:1755px;top:176px;width:135px;height:34px;background:#fff;border:1px solid #e0e0e0;border-bottom-color:#c4c4c4;border-radius:4px"></div>
<div class="t" style="right:157px;top:182px;color:#ad7620">入库日期：</div>
<div class="t" style="left:1762px;top:183px;">2025<i class="sl">/</i>07<i class="sl">/</i>01</div>
<svg style="left:1870px;top:190.5px" width="9" height="6" viewBox="0 0 9 6"><path d="M0.6 0.6L4.5 4.5L8.4 0.6" fill="none" stroke="#333" stroke-width="1.1"/></svg>
<div class="a" style="left:1755px;top:216px;width:135px;height:34px;background:#fff;border:1px solid #e0e0e0;border-bottom-color:#c4c4c4;border-radius:4px"></div>
<div class="t" style="left:1762px;top:223px;">2025<i class="sl">/</i>07<i class="sl">/</i>29</div>
<svg style="left:1870px;top:230.5px" width="9" height="6" viewBox="0 0 9 6"><path d="M0.6 0.6L4.5 4.5L8.4 0.6" fill="none" stroke="#333" stroke-width="1.1"/></svg>
<div class="a" style="left:1755px;top:256px;width:135px;height:34px;background:#fff;border:1px solid #e0e0e0;border-bottom-color:#c4c4c4;border-radius:4px"></div>
<div class="t" style="right:157px;top:262px;color:#2b2b2b">门店：</div>
<div class="t" style="left:1762px;top:263px;">海珠总店</div>
<svg style="left:1870px;top:270.5px" width="9" height="6" viewBox="0 0 9 6"><path d="M0.6 0.6L4.5 4.5L8.4 0.6" fill="none" stroke="#333" stroke-width="1.1"/></svg>
<div class="a" style="left:1755px;top:296px;width:135px;height:34px;background:#fff;border:1px solid #e0e0e0;border-bottom-color:#c4c4c4;border-radius:4px"></div>
<div class="t" style="right:157px;top:302px;color:#2b2b2b">业务员：</div>
<svg style="left:1870px;top:310.5px" width="9" height="6" viewBox="0 0 9 6"><path d="M0.6 0.6L4.5 4.5L8.4 0.6" fill="none" stroke="#333" stroke-width="1.1"/></svg>
<div class="a" style="left:1755px;top:336px;width:135px;height:34px;background:#fff;border:1px solid #e0e0e0;border-bottom-color:#c4c4c4;border-radius:4px"></div>
<div class="t" style="right:157px;top:342px;color:#2b2b2b">加工商：</div>
<svg style="left:1870px;top:350.5px" width="9" height="6" viewBox="0 0 9 6"><path d="M0.6 0.6L4.5 4.5L8.4 0.6" fill="none" stroke="#333" stroke-width="1.1"/></svg>
<div class="a" style="left:1755px;top:376px;width:135px;height:34px;background:#fff;border:1px solid #e0e0e0;border-bottom-color:#c4c4c4;border-radius:4px"></div>
<div class="t" style="right:157px;top:382px;color:#2b2b2b">单据编号：</div>
<div class="a" style="left:1766px;top:944px;width:129px;height:39px;background:#fff;border:2px solid #d9a236;border-radius:5px"></div>
<svg style="left:1778px;top:955px" width="16" height="16" viewBox="0 0 16 16"><circle cx="6.8" cy="6.8" r="5.8" fill="none" stroke="#333" stroke-width="1.5"/><path d="M11 11L15 15" stroke="#333" stroke-width="1.6" stroke-linecap="round"/></svg>
<div class="t" style="left:1833px;top:951.5px;">搜索</div>
<div class="a" style="left:1878px;top:695px;width:40px;height:248px;background:#b6b8bb;border-radius:12px 0 0 12px;box-shadow:-2px 2px 6px rgba(0,0,0,.18)"></div>
<div class="a" style="left:1910px;top:695px;width:1px;height:248px;background:#a4a6a9"></div>
<svg style="left:1888px;top:708px" width="13" height="15" viewBox="0 0 13 15"><path d="M0.5 0.5H12.5V10.5L6.5 14.5L0.5 10.5Z" fill="#2dc878"/><path d="M3.6 6.8L5.8 9L9.6 5" fill="none" stroke="#fff" stroke-width="1.6"/></svg>
<div class="a" style="left:1883px;top:731px;width:23px;height:1px;background:#a8aaad"></div>
<svg style="left:1890px;top:739px" width="10" height="30" viewBox="0 0 10 30"><defs><linearGradient id="gg" x1="0" y1="0" x2="0" y2="1"><stop offset="0" stop-color="#f0a020"/><stop offset="0.45" stop-color="#e8b020"/><stop offset="1" stop-color="#3cc6b0"/></linearGradient></defs><rect x="0" y="0" width="10" height="30" rx="5" fill="#c9cacc"/><path d="M0 9H10V25A5 5 0 0 1 0 25Z" fill="url(#gg)"/></svg>
<div class="a" style="left:1883px;top:777px;width:23px;height:1px;background:#a8aaad"></div>
<div class="t" style="left:1595px;width:600px;text-align:center;top:784px;font-size:9px;font-weight:bold;color:#fff;line-height:12px">0.0</div>
<svg style="left:1884px;top:798px" width="6" height="8" viewBox="0 0 6 8"><path d="M3 7.5V2.5M0.8 3.8L3 1.2L5.2 3.8Z" fill="#1e96ff" stroke="#1e96ff" stroke-width="1.1"/></svg>
<div class="t" style="left:1893px;top:795.5px;font-size:9px;color:#f0f0f0;line-height:12px"><span>K/s</span></div>
<div class="t" style="left:1595px;width:600px;text-align:center;top:810px;font-size:9px;font-weight:bold;color:#fff;line-height:12px">1.0</div>
<svg style="left:1884px;top:824px" width="6" height="8" viewBox="0 0 6 8"><path d="M3 0.5V5.5M0.8 4.2L3 6.8L5.2 4.2Z" fill="#22b04a" stroke="#22b04a" stroke-width="1.1"/></svg>
<div class="t" style="left:1893px;top:822px;font-size:9px;color:#f0f0f0;line-height:12px"><span>K/s</span></div>
<div class="a" style="left:1883px;top:839px;width:23px;height:1px;background:#a8aaad"></div>
<svg style="left:1887px;top:851px" width="15" height="15" viewBox="0 0 15 15"><circle cx="7.5" cy="7.5" r="7" fill="#e3e3e3"/><path d="M7.5 0.5Q3 4 7.5 7.5Q12 11 7.5 14.5" fill="none" stroke="#b6b8bb" stroke-width="2"/></svg>
<svg style="left:1887px;top:882px" width="15" height="15" viewBox="0 0 15 15"><path d="M3 0V12H15M0 3H12V15" fill="none" stroke="#e3e3e3" stroke-width="1.8"/><path d="M5 10L11 4V10Z" fill="#e3e3e3"/></svg>
<svg style="left:1887px;top:912px" width="15" height="14" viewBox="0 0 15 14"><path d="M0.5 2A1.5 1.5 0 0 1 2 0.5H6L7.5 2H13A1.5 1.5 0 0 1 14.5 3.5V12A1.5 1.5 0 0 1 13 13.5H2A1.5 1.5 0 0 1 0.5 12Z" fill="#e3e3e3"/><circle cx="7" cy="7.5" r="2.6" fill="none" stroke="#b6b8bb" stroke-width="1.3"/><path d="M9 9.5L11 11.5" stroke="#b6b8bb" stroke-width="1.3"/></svg>
</body></html>
